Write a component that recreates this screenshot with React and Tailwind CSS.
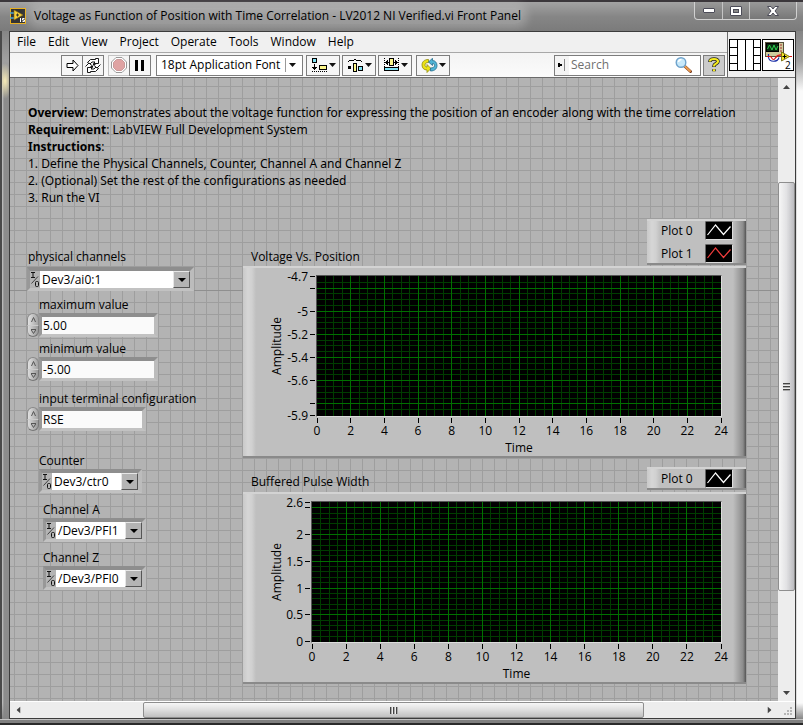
import React from "react";

const menuItems = ["File", "Edit", "View", "Project", "Operate", "Tools", "Window", "Help"];

const Caret = () => (
  <svg width="7" height="4" viewBox="0 0 7 4" aria-hidden="true">
    <path d="M0 0h7L3.500 4z" fill="#111" />
  </svg>
);

const TitleBar = () => (
  <header className="flex h-[31px] items-start justify-between border-t-2 border-[#3b373b] bg-gradient-to-b from-[#a3a3a3] via-[#868686] to-[#7b7b7b] pl-2.5">
    <div className="flex items-center gap-1.5 pt-1.5">
      <svg width="16" height="16" viewBox="0 0 16 16" aria-hidden="true">
        <rect x="0.5" y="0.5" width="15" height="15" fill="#333" stroke="#e8b020" />
        <path d="M0 5h5M0 10h5" stroke="#4aa3d8" strokeWidth="1.5" />
        <path d="M4 2l9 5-9 5z" fill="#f5cf3c" stroke="#8a6a10" strokeWidth="0.6" />
        <path d="M6 7h3M7.5 5.5v3" stroke="#333" />
        <path d="M10.500 10v4M14.500 10.500h-2v1.500h2v1.500h-2" stroke="#fff" fill="none" />
      </svg>
      <h1 className="rounded-full bg-white/20 px-0.5 text-[12px] leading-4 whitespace-nowrap text-black shadow-[0_0_8px_5px_rgba(255,255,255,0.2)]">
        Voltage as Function of Position with Time Correlation - LV2012 NI Verified.vi Front Panel
      </h1>
    </div>
    <div className="mr-1.5 flex h-[18px] shrink-0 rounded-b border border-t-0 border-[#d0d0d0] bg-gradient-to-b from-[#999] to-[#777]">
      <button aria-label="Minimize" className="flex w-7 items-center justify-center border-r border-[#c4c4c4]">
        <svg width="12" height="5" viewBox="0 0 12 5">
          <rect x="0.5" y="0.5" width="11" height="4" rx="0.5" fill="#fff" stroke="#4c4c58" />
        </svg>
      </button>
      <button aria-label="Maximize" className="flex w-[27px] items-center justify-center border-r border-[#c4c4c4]">
        <svg width="12" height="10" viewBox="0 0 12 10">
          <rect x="0.5" y="0.5" width="11" height="9" rx="0.5" fill="#fff" stroke="#4c4c58" />
          <rect x="3.5" y="3.5" width="5" height="3" fill="#888" stroke="#4c4c58" />
        </svg>
      </button>
      <button aria-label="Close" className="flex w-[46px] items-center justify-center">
        <svg width="12" height="10" viewBox="0 0 12 10">
          <path d="M0.5 0.5h3.5L6 3l2-2.5h3.5L8 5l3.5 4.5H8L6 7 4 9.5H0.5L4 5z" fill="#fff" stroke="#4c4c58" />
        </svg>
      </button>
    </div>
  </header>
);

const ToolButton = ({ label, className = "", children }) => (
  <button
    aria-label={label}
    className={`flex h-[21px] shrink-0 items-center justify-center border border-[#7d7d7d] ${className}`}
  >
    {children}
  </button>
);

const AlignIcon = () => (
  <svg width="17" height="14" viewBox="0 0 17 14" shapeRendering="crispEdges">
    <rect x="1.5" y="0.5" width="4" height="4" fill="#7fe3f5" stroke="#000" />
    <path d="M3 6h1v4h-1zM1 9h5v1h-5zM2 10h3v1h-3zM3 11h1v1h-1z" fill="#000" />
    <rect x="8.500" y="7.500" width="7" height="4" fill="#fbf58a" stroke="#000" />
    <path d="M1 13.500h15" stroke="#000" strokeDasharray="1 1" />
  </svg>
);

const DistributeIcon = () => (
  <svg width="17" height="14" viewBox="0 0 17 14" shapeRendering="crispEdges">
    <path d="M1 3h1v-1h5v-1h2v1h5v1h1v1h-1v-1h-5v-1h-2v1h-5v1h-1z" fill="#000" />
    <path d="M1 8h3v3H1z" fill="#000" />
    <rect x="6.500" y="5.500" width="3" height="8" fill="#fbf58a" stroke="#000" />
    <rect x="11.500" y="8.500" width="4" height="4" fill="#7fe3f5" stroke="#000" />
  </svg>
);

const ResizeIcon = () => (
  <svg width="17" height="14" viewBox="0 0 17 14" shapeRendering="crispEdges">
    <path d="M1.500 0v14M15.500 0v14" stroke="#000" strokeDasharray="1 1" />
    <path d="M2 4h5v1H2zM3 3h1v3H3zM4 2h1v5H4zM10 4h5v1h-5zM13 3h1v3h-1zM12 2h1v5h-1z" fill="#000" />
    <rect x="6.500" y="0.500" width="4" height="7" fill="#fbf58a" stroke="#000" />
    <rect x="1.500" y="9.500" width="14" height="3" fill="#7fe3f5" stroke="#000" />
  </svg>
);

const ReorderIcon = () => (
  <svg width="17" height="15" viewBox="0 0 17 15">
    <path d="M7.500 1.500C3 1.500 1 4 1 7s2 5 5 5v2.500l4-4-4-4V9C4.500 9 4 8 4 7c0-1.500 1-2.500 3.500-2.500z" fill="#ece316" stroke="#8f8a10" strokeWidth="0.800" />
    <path d="M9.500 13c4.500 0 6.500-2.500 6.500-5.500S14 2.500 11.500 2.500V0.300l-4 3.700 4 3.500V5.500c1.500 0 2 1 2 2 0 1.500-1.500 2.500-4 2.500z" fill="#4fb3d4" stroke="#246c8c" strokeWidth="0.800" />
  </svg>
);

const Toolbar = () => (
  <div className="flex h-[26px] items-center border-y border-t-[#a8a8a8] border-b-[#6b6b6b] bg-gradient-to-b from-[#f4f4f4] to-[#fbfbfb] pr-0.5 pl-[51px]">
    <ToolButton label="Run" className="w-[22px] bg-[#f6f6f6]">
      <svg width="13" height="13" viewBox="0 0 13 13">
        <path d="M1 4.500h6v-3.500l5 5.500-5 5.500V8.500H1z" fill="#fff" stroke="#000" />
      </svg>
    </ToolButton>
    <ToolButton label="Run Continuously" className="-ml-px w-[22px] bg-[#f6f6f6]">
      <svg width="16" height="15" viewBox="0 0 16 15">
        <path d="M2.500 4.500l3-3h5V0.500l3 0v5h-5l1.500-1.500h-3l-2 2z" fill="#fff" stroke="#000" strokeWidth="0.900" />
        <path d="M13.500 10.500l-3 3h-5v1h-3v-5h5L6 11h3l2-2z" fill="#fff" stroke="#000" strokeWidth="0.900" />
        <path d="M0.500 8.500l3.500-3.500 4 3.500H5.500M15.500 6.500L12 10 8 6.500h2.500" fill="#fff" stroke="#000" strokeWidth="0.900" />
      </svg>
    </ToolButton>
    <ToolButton label="Abort Execution" className="ml-1 w-[22px] border-[#c4c4c4] bg-[#f6f6f6]">
      <svg width="16" height="16" viewBox="0 0 16 16">
        <path d="M5 0.500h6L15.500 5v6L11 15.500H5L0.500 11V5z" fill="#fff" stroke="#999" />
        <path d="M5.500 2.500h5L13.500 5.500v5L10.500 13.500h-5L2.500 10.500v-5z" fill="#dfa3a3" stroke="#c99a9a" />
      </svg>
    </ToolButton>
    <ToolButton label="Pause" className="-ml-px w-[22px] bg-[#f6f6f6]">
      <svg width="10" height="11" viewBox="0 0 10 11">
        <path d="M0 0h3v11H0zM6 0h3v11H6z" fill="#000" />
      </svg>
    </ToolButton>
    <ToolButton label="Text Settings" className="ml-[5px] w-[147px] bg-white pl-1">
      <span className="grow text-left text-[12px] leading-4 whitespace-nowrap">18pt Application Font</span>
      <span className="flex h-3.5 w-[17px] items-center border-l border-[#999] pl-[3px]">
        <Caret />
      </span>
    </ToolButton>
    <ToolButton label="Align Objects" className="ml-[3px] w-[34px] gap-px bg-[#f6f6f6]">
      <AlignIcon />
      <Caret />
    </ToolButton>
    <ToolButton label="Distribute Objects" className="ml-0.5 w-[34px] gap-px bg-[#f6f6f6]">
      <DistributeIcon />
      <Caret />
    </ToolButton>
    <ToolButton label="Resize Objects" className="ml-0.5 w-[34px] gap-px bg-[#f6f6f6]">
      <ResizeIcon />
      <Caret />
    </ToolButton>
    <ToolButton label="Reorder" className="ml-1 w-[34px] gap-px bg-[#f6f6f6]">
      <ReorderIcon />
      <Caret />
    </ToolButton>
    <div className="ml-auto flex h-[21px] w-[147px] items-center border border-[#7d7d7d] bg-white">
      <span className="flex h-full w-3.5 items-center bg-[#f4f4f4] pl-[3px]">
        <svg width="8" height="12" viewBox="0 0 8 12" aria-hidden="true" shapeRendering="crispEdges">
          <path d="M0 4h2v1h2v2h-2v1h-2z" fill="#000" />
          <path d="M6.500 0v12" stroke="#888" />
        </svg>
      </span>
      <input
        type="text"
        aria-label="Search"
        placeholder="Search"
        className="w-0 grow bg-white pl-0.5 text-[12px] leading-4 outline-none placeholder:text-[#6f6f6f]"
      />
      <svg className="mr-2" width="17" height="16" viewBox="0 0 17 16" aria-hidden="true">
        <path d="M10 9.500l5.500 5" stroke="#7a3d20" strokeWidth="3" strokeLinecap="round" />
        <path d="M9.500 9l5.500 5" stroke="#eb9a4c" strokeWidth="2" strokeLinecap="round" />
        <circle cx="6" cy="5.500" r="4.800" fill="#c8e9fa" stroke="#6fa3cc" strokeWidth="1.400" />
        <path d="M3.500 5a3 3 0 0 1 3-2.500" stroke="#fff" fill="none" strokeWidth="1.500" />
      </svg>
    </div>
    <ToolButton label="Show Context Help" className="ml-0.5 w-[22px] bg-[#cbcbcb]">
      <svg width="12" height="16" viewBox="0 0 12 16">
        <path d="M2 5V4.500c0-2 1.500-2.500 4-2.500s4 0.500 4 2.500c0 2-4 2.200-4 4.500v1M6 12.200v2" fill="none" stroke="#222" strokeWidth="3.600" />
        <path d="M2 4.600V4.300c0-1.800 1.500-2.300 4-2.300s4 0.500 4 2.500c0 2-4 2.200-4 4.500v0.500M6 12.200v2" fill="none" stroke="#f6ec1c" strokeWidth="2.200" />
      </svg>
    </ToolButton>
  </div>
);

const ConnectorPane = () => (
  <svg width="32" height="32" viewBox="0 0 32 32" shapeRendering="crispEdges" aria-hidden="true">
    <rect x="0.500" y="0.500" width="31" height="31" fill="#fff" stroke="#000" />
    <path d="M8.500 0v32M16.500 0v32M24.500 0v32M0 8.500h8M0 16.500h8M0 24.500h8M24 8.500h8M24 16.500h8M24 24.500h8" stroke="#000" />
  </svg>
);

const ViIcon = () => (
  <svg width="32" height="32" viewBox="0 0 32 32" aria-hidden="true">
    <rect x="0.500" y="0.500" width="31" height="31" fill="#fff" stroke="#000" />
    <rect x="3.500" y="3.500" width="18" height="14" fill="#cfcb9c" stroke="#55513c" />
    <rect x="4.500" y="4.500" width="12" height="8" fill="#072c10" stroke="#000" />
    <path d="M5.500 10l2-4 2.500 5 2-5 2 5 2-4" fill="none" stroke="#2fd04c" />
    <path d="M18 6h2M18 9h2M18 12h2" stroke="#a33" />
    <path d="M6.500 15v3.500c1 5 9 5 10.500 0" fill="none" stroke="#1c2fa8" strokeWidth="1.200" />
    <path d="M5 17.500h3c2 0 1.500 3 3.500 3s2-5 8-4.500M26 17.500h4" fill="none" stroke="#e01515" strokeWidth="1.200" />
    <path d="M19.500 13l8 4.500-8 4.500z" fill="#f5e62a" stroke="#6b6100" strokeWidth="0.800" />
    <path d="M20.500 17.500h4M22.500 15.500v4" stroke="#000" />
    <text x="23" y="30" fontSize="10" fill="#000">
      2
    </text>
  </svg>
);

const IoGlyph = () => (
  <svg className="shrink-0" width="10" height="17" viewBox="0 0 10 17" aria-hidden="true">
    <path d="M1 1.500h4M3 1.500v5M1 6.500h4" stroke="#111" fill="none" />
    <path d="M1.500 12.500l6.500-7" stroke="#333" strokeWidth="0.900" />
    <rect x="5.500" y="10.500" width="3" height="5" rx="1" stroke="#111" fill="none" />
  </svg>
);

const sunken =
  "flex border-t-4 border-r-4 border-b-[3px] border-l-[3px] border-t-[#8e8e8e] border-r-[#bcbcbc] border-b-[#c2c2c2] border-l-[#989898]";

const IoCombo = ({ id, label, value, className = "", labelClass = "", boxClass = "" }) => (
  <div className={className}>
    <label htmlFor={id} className={`block text-[12px] leading-4 ${labelClass}`}>
      {label}
    </label>
    <div className={`${sunken} bg-[#b4b4b4] ${boxClass}`}>
      <IoGlyph />
      <div className="relative h-[17px] grow bg-white">
        <select id={id} defaultValue={value} className="block h-[17px] w-full appearance-none pl-0.5 text-[12px] leading-[17px] outline-none">
          <option>{value}</option>
        </select>
        <span className="pointer-events-none absolute top-0 right-0 flex h-[17px] w-[17px] items-center justify-center border border-t-[#e6e6e6] border-r-[#555] border-b-[#555] border-l-[#e6e6e6] bg-[#b4b4b4]">
          <svg width="8" height="4" viewBox="0 0 8 4" aria-hidden="true">
            <path d="M0 0h8L4 4z" fill="#000" />
          </svg>
        </span>
      </div>
    </div>
  </div>
);

const Spinner = ({ name }) => (
  <div className="flex w-3 shrink-0 flex-col">
    <button aria-label={`Increase ${name}`} className="flex h-3 items-center justify-center rounded-t-full border border-b-0 border-[#8a8a8a] bg-gradient-to-r from-[#e2e2e2] to-[#a4a4a4]">
      <svg width="5" height="5" viewBox="0 0 5 5">
        <path d="M0.500 5L2.500 0.500 4.500 5" fill="none" stroke="#555" />
      </svg>
    </button>
    <button aria-label={`Decrease ${name}`} className="flex h-3 items-center justify-center rounded-b-full border border-t-[#ccc] border-r-[#777] border-b-[#777] border-l-[#999] bg-gradient-to-r from-[#dcdcdc] to-[#999]">
      <svg width="5" height="5" viewBox="0 0 5 5">
        <path d="M0 0.500h5L2.500 4.500z" fill="none" stroke="#555" />
      </svg>
    </button>
  </div>
);

const SpinField = ({ id, label, value, className = "", boxClass }) => (
  <div className={className}>
    <label htmlFor={id} className="block pl-3 text-[12px] leading-4">
      {label}
    </label>
    <div className="flex">
      <Spinner name={label} />
      <div className={`${sunken} ${boxClass}`}>
        <input id={id} type="text" defaultValue={value} className="h-[17px] w-full bg-[#fafafa] pl-px text-[12px] leading-[17px] outline-none" />
      </div>
    </div>
  </div>
);

const raised =
  "border-t-2 border-b-2 border-t-[#d3d3d3] border-b-[#8a8a8a] bg-[linear-gradient(90deg,#c9c9c9_0,#d6d6d6_5px,#d0d0d0_9px,#bfbfbf_13px,#bfbfbf_calc(100%-13px),#8c8c8c_calc(100%-3px),#555_100%)]";

const PlotLegend = ({ plots }) => (
  <div className={`flex w-[99px] flex-col ${raised}`}>
    {plots.map((plot) => (
      <div key={plot.name} className="flex h-[19px] items-center pl-3.5 not-first:mt-1">
        <span className="w-[44px] text-[12px] leading-4 whitespace-nowrap">{plot.name}</span>
        <svg width="28" height="19" viewBox="0 0 28 19" aria-hidden="true">
          <rect x="0.500" y="0.500" width="27" height="18" fill="#000" stroke="#ddd" />
          <path d="M0.500 18.500V0.500h27" fill="none" stroke="#666" />
          <path d="M2.500 14l8-10 8 9.500 7-8" fill="none" stroke={plot.color} strokeWidth="1.200" />
        </svg>
      </div>
    ))}
  </div>
);

const X_MAX = 24;
const PLOT_HEIGHT = 140;

const range = (start, end, step) => {
  const values = [];
  for (let i = 0; start + i * step <= end + 0.0001; i++) values.push(start + i * step);
  return values;
};

const Graph = ({ min, max, minorY, majorY, labelsY, ticksY, padClass }) => {
  const toY = (v) => Math.round(((max - v) / (max - min)) * (PLOT_HEIGHT - 1)) + 0.5;
  const toX = (v) => `${(v / X_MAX) * 100}%`;

  return (
    <div className={`h-48 pt-[7px] pr-6 ${raised} ${padClass}`}>
      <div className="border border-t-[#555] border-r-[#dcdcdc] border-b-[#dcdcdc] border-l-[#555] bg-black">
        <svg className="block h-[140px] w-full overflow-visible text-[12px]" role="img" aria-label="Amplitude against time">
          <g shapeRendering="crispEdges">
            {range(0.5, X_MAX - 0.5, 0.5).map((v) => (
              <line key={v} x1={toX(v)} x2={toX(v)} y1="0" y2={PLOT_HEIGHT} stroke="#003c00" />
            ))}
            {minorY.map((v) => (
              <line key={v} x1="0" x2="100%" y1={toY(v)} y2={toY(v)} stroke="#003c00" />
            ))}
            {range(2, X_MAX - 2, 2).map((v) => (
              <line key={v} x1={toX(v)} x2={toX(v)} y1="0" y2={PLOT_HEIGHT} stroke="#007000" />
            ))}
            {majorY.map((v) => (
              <line key={v} x1="0" x2="100%" y1={toY(v)} y2={toY(v)} stroke="#007000" />
            ))}
            {range(0, X_MAX, 2).map((v) => (
              <line key={v} x1={toX(v)} x2={toX(v)} y1="142" y2="147" stroke="#000" />
            ))}
            {ticksY.map((v) => (
              <line key={v} x1="-7" x2="-2" y1={toY(v)} y2={toY(v)} stroke="#000" />
            ))}
          </g>
          {range(0, X_MAX, 2).map((v) => (
            <text key={v} x={toX(v)} y="159" textAnchor="middle">
              {v}
            </text>
          ))}
          {labelsY.map((v) => (
            <text key={v} x="-9" y={toY(v) + 4} textAnchor="end">
              {v}
            </text>
          ))}
          <text x="50%" y="176" textAnchor="middle">
            Time
          </text>
        </svg>
      </div>
    </div>
  );
};

const GraphSection = ({ title, plots, className = "", headClass, ...graph }) => (
  <section className={className}>
    <div className={`flex items-end justify-between pl-2 ${headClass}`}>
      <h2 className="text-[12px] leading-4">{title}</h2>
      <PlotLegend plots={plots} />
    </div>
    <div className="relative">
      <Graph {...graph} />
      <span className="absolute top-[72px] left-[34px] flex h-4 w-0 -rotate-90 items-center justify-center text-[12px] leading-4">
        Amplitude
      </span>
    </div>
  </section>
);

const FrontPanel = () => (
  <main className="grow bg-[#b3b3b3] [background-image:linear-gradient(#8f8f8f,#8f8f8f),linear-gradient(#9e9e9e_1px,transparent_1px),linear-gradient(90deg,#9e9e9e_1px,transparent_1px)] [background-position:0_212px,4px_8px,4px_8px] [background-repeat:no-repeat,repeat,repeat] [background-size:100%_1px,12px_12px,12px_12px] pt-[26px] pb-[17px] pl-[17px]">
    <div className="pl-px font-['Noto_Sans',sans-serif] text-[12px] leading-[17px]">
      <p className="whitespace-nowrap">
        <b>Overview</b>: Demonstrates about the voltage function for expressing the position of an encoder along with the time correlation
      </p>
      <p>
        <b>Requirement</b>: LabVIEW Full Development System
      </p>
      <p>
        <b>Instructions</b>:
      </p>
      <p>1. Define the Physical Channels, Counter, Channel A and Channel Z</p>
      <p>2. (Optional) Set the rest of the configurations as needed</p>
      <p>3. Run the VI</p>
    </div>

    <div className="mt-[13px] flex pr-8">
      <form className="w-[216px] shrink-0 pt-[30px]">
        <IoCombo id="physical" label="physical channels" value="Dev3/ai0:1" labelClass="mb-0.5 pl-px" boxClass="w-[167px]" />
        <SpinField id="max" label="maximum value" value="5.00" className="mt-1.5" boxClass="w-[119px]" />
        <SpinField id="min" label="minimum value" value="-5.00" className="mt-1" boxClass="w-[119px]" />
        <SpinField id="terminal" label="input terminal configuration" value="RSE" className="mt-2.5" boxClass="w-[107px]" />
        <IoCombo id="counter" label="Counter" value="Dev3/ctr0" className="mt-[22px] pl-3" boxClass="w-[103px]" />
        <IoCombo id="channel-a" label="Channel A" value="/Dev3/PFI1" className="mt-[9px] pl-4" boxClass="w-[103px]" />
        <IoCombo id="channel-z" label="Channel Z" value="/Dev3/PFI0" className="mt-2 pl-4" boxClass="w-[103px]" />
      </form>

      <div className="min-w-0 grow">
        <GraphSection
          title="Voltage Vs. Position"
          plots={[
            { name: "Plot 0", color: "#ffffff" },
            { name: "Plot 1", color: "#f03c3c" },
          ]}
          headClass="pb-px"
          min={-5.9}
          max={-4.7}
          minorY={range(-5.85, -4.75, 0.05)}
          majorY={[-4.8, -5, -5.2, -5.4, -5.6, -5.8]}
          ticksY={[-4.7, -4.8, -5, -5.2, -5.4, -5.6, -5.8, -5.9]}
          labelsY={[-4.7, -5, -5.2, -5.4, -5.6, -5.9]}
          padClass="pl-[73px]"
        />
        <GraphSection
          title="Buffered Pulse Width"
          plots={[{ name: "Plot 0", color: "#ffffff" }]}
          className="mt-[9px]"
          headClass="pb-0.5"
          min={0}
          max={2.6}
          minorY={range(0.1, 2.5, 0.1)}
          majorY={[0.5, 1, 1.5, 2, 2.5]}
          ticksY={[0, 0.5, 1, 1.5, 2, 2.5, 2.6]}
          labelsY={[0, 0.5, 1, 1.5, 2, 2.6]}
          padClass="pl-[68px]"
        />
      </div>
    </div>
  </main>
);

const Arrow = ({ className }) => (
  <svg className={className} width="7" height="4" viewBox="0 0 7 4">
    <path d="M0 4L3.500 0 7 4z" fill="#444" />
  </svg>
);

const VerticalScroll = () => (
  <div className="flex w-[17px] shrink-0 flex-col bg-[#ededed]">
    <button aria-label="Scroll up" className="flex h-[17px] items-center justify-center">
      <Arrow />
    </button>
    <div className="flex-[87_0_0px]" />
    <div className="flex flex-[409_0_0px] items-center justify-center rounded-xs border border-[#8e8e8e] bg-gradient-to-r from-[#f6f6f6] via-[#e2e2e4] to-[#bcbcc0]">
      <span className="h-2 w-[7px] bg-[repeating-linear-gradient(#444_0_1px,#aaa_1px_2px,#eee_2px_3px)]" />
    </div>
    <div className="flex-[93_0_0px]" />
    <button aria-label="Scroll down" className="flex h-[17px] items-center justify-center">
      <Arrow className="rotate-180" />
    </button>
  </div>
);

const HorizontalScroll = () => (
  <div className="flex h-[17px] border-t border-white bg-[#ededed]">
    <button aria-label="Scroll left" className="flex w-[17px] items-center justify-center">
      <Arrow className="-rotate-90" />
    </button>
    <div className="flex-[116_0_0px]" />
    <div className="flex flex-[501_0_0px] items-center justify-center rounded-xs border border-[#8e8e8e] bg-gradient-to-b from-[#f6f6f6] via-[#dedede] to-[#c0c0c0]">
      <span className="h-[7px] w-2 bg-[repeating-linear-gradient(90deg,#444_0_1px,#aaa_1px_2px,#eee_2px_3px)]" />
    </div>
    <div className="flex-[117_0_0px]" />
    <button aria-label="Scroll right" className="flex w-[17px] items-center justify-center">
      <Arrow className="rotate-90" />
    </button>
    <div className="flex w-[17px] items-end justify-end p-0.5">
      <svg width="9" height="9" viewBox="0 0 9 9" aria-hidden="true">
        <path d="M6 0h2v2H6zM3 3h2v2H3zM6 3h2v2H6zM0 6h2v2H0zM3 6h2v2H3zM6 6h2v2H6z" fill="#b5b5b5" />
      </svg>
    </div>
  </div>
);

const glass =
  "[background-image:radial-gradient(ellipse_7px_18px_at_3px_50px,#f7ebb8,transparent),linear-gradient(#858585_0,#a0a0a0_30px,transparent_60px,transparent_calc(100%-16px),#858585),linear-gradient(90deg,#c8c8c8_0,#8c8c8c_2px,#7a7a7a_50%,#8c8c8c_calc(100%-8px),#fafafa_calc(100%-6px))]";

const App = () => {
  return (
    <div className="flex min-h-screen flex-col bg-[#838383] font-['Open_Sans',sans-serif] text-black">
      <TitleBar />
      <div className={`flex grow flex-col border-l-2 border-[#4a4a4a] pr-[7px] pl-[7px] ${glass}`}>
        <div className="flex grow flex-col border border-[#3c3c3c] bg-[#f0f0f0]">
          <div className="flex">
            <div className="min-w-0 grow">
              <nav className="flex h-5 items-center gap-3 bg-[#f0f0f0] pl-[7px]">
                {menuItems.map((item) => (
                  <button key={item} className="text-[12px] leading-4">
                    {item}
                  </button>
                ))}
              </nav>
              <Toolbar />
            </div>
            <div className="flex shrink-0 items-center gap-px border-b border-l border-[#6b6b6b] pr-px pl-px">
              <ConnectorPane />
              <ViIcon />
            </div>
          </div>
          <div className="flex grow">
            <FrontPanel />
            <VerticalScroll />
          </div>
          <HorizontalScroll />
        </div>
      </div>
      <footer className="h-1.5 border-t border-b-2 border-t-[#c4c4c4] border-b-[#2a2a2a] bg-[#808080]" />
    </div>
  );
};

export default App;
